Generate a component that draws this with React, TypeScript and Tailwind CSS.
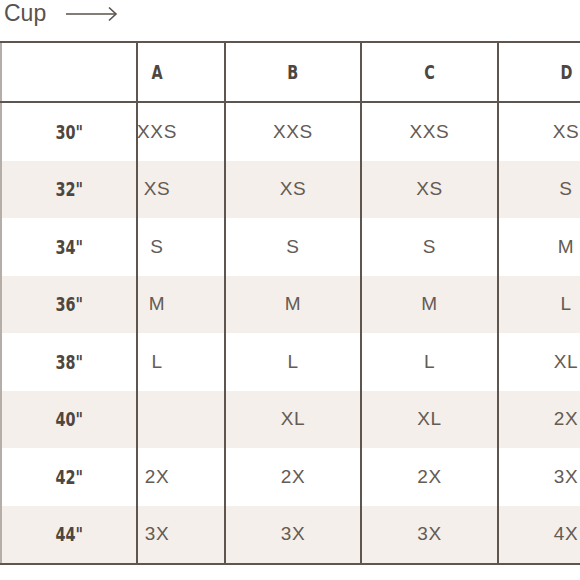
import React from 'react';

const rows: { bust: string; sizes: string[] }[] = [
  { bust: '30"', sizes: ['XXS', 'XXS', 'XXS', 'XS'] },
  { bust: '32"', sizes: ['XS', 'XS', 'XS', 'S'] },
  { bust: '34"', sizes: ['S', 'S', 'S', 'M'] },
  { bust: '36"', sizes: ['M', 'M', 'M', 'L'] },
  { bust: '38"', sizes: ['L', 'L', 'L', 'XL'] },
  { bust: '40"', sizes: ['', 'XL', 'XL', '2X'] },
  { bust: '42"', sizes: ['2X', '2X', '2X', '3X'] },
  { bust: '44"', sizes: ['3X', '3X', '3X', '4X'] },
];

const cups = ['A', 'B', 'C', 'D'];

const gridCols = 'grid grid-cols-[136px_88px_136px_137px_136px]';
const headFont = "font-['DejaVu_Sans_Condensed',sans-serif] font-bold text-[20px] text-[#4e4640]";
const bodyFont = "font-['Liberation_Sans',Arial,sans-serif] text-[19px] tracking-[0.6px] text-[#645b54]";

// condensed bold label, squeezed a bit more to get the DIN-ish look
function Head({ children }: { children: React.ReactNode }) {
  return <span className={`inline-block scale-x-[0.8] ${headFont}`}>{children}</span>;
}

function CupCell({ index, children }: { index: number; children: React.ReactNode }) {
  // first cup column is narrow and its text sits in a small box hugging the left line
  if (index === 0) {
    return (
      <div className="border-l-2 border-[#5e554e] flex items-center">
        <span className="w-[38px] flex justify-center whitespace-nowrap">{children}</span>
      </div>
    );
  }
  return (
    <div className="border-l-2 border-[#5e554e] flex items-center justify-center whitespace-nowrap">
      {children}
    </div>
  );
}

const App: React.FC = () => {
  return (
    <div className="w-[580px] h-[580px] overflow-hidden bg-white">
      <div className="h-[41px] flex items-start gap-[20px] pl-[4px]">
        <span className="font-['Liberation_Sans',Arial,sans-serif] text-[23px] leading-[26px] text-[#5a524b]">Cup</span>
        <svg width="52" height="16" viewBox="0 0 52 16" className="mt-[6px]" fill="none" stroke="#5a524b" strokeWidth="1.6">
          <path d="M0 8 H50" />
          <path d="M43 1.5 L50 8 L43 14.5" strokeLinejoin="miter" />
        </svg>
      </div>

      <div className="w-[633px] border-y-2 border-[#5e554e]">
        <div className={`${gridCols} h-[60px] border-b-2 border-[#5e554e]`}>
          <div className="border-l-2 border-[#b5aea8]" />
          {cups.map((c, i) => (
            <CupCell key={c} index={i}>
              <Head>{c}</Head>
            </CupCell>
          ))}
        </div>

        {rows.map((r, ri) => (
          <div
            key={r.bust}
            className={`${gridCols} h-[57.5px] ${ri % 2 === 1 ? 'bg-[#f4efea]' : 'bg-white'}`}
          >
            <div className="border-l-2 border-[#b5aea8] flex items-center justify-center">
              <Head>{r.bust}</Head>
            </div>
            {r.sizes.map((s, i) => (
              <CupCell key={i} index={i}>
                <span className={bodyFont}>{s}</span>
              </CupCell>
            ))}
          </div>
        ))}
      </div>
    </div>
  );
};

export default App;
